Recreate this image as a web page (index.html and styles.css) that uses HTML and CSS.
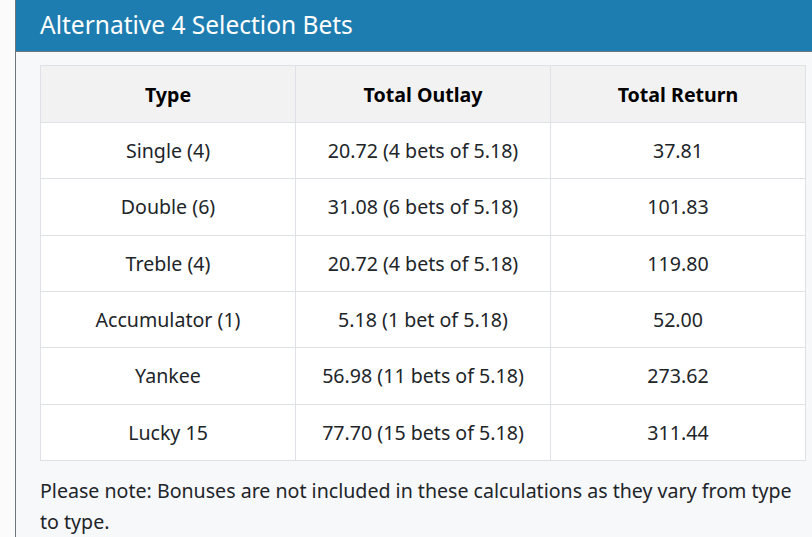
FILE: index.html
```html
<!DOCTYPE html>
<html>
<head>
<meta charset="utf-8">
<link rel="stylesheet" href="styles.css">
</head>
<body>
<div class="panel">
  <div class="panel-head">Alternative 4 Selection Bets</div>
  <div class="panel-body">
    <table class="bets">
      <thead>
        <tr><th>Type</th><th>Total Outlay</th><th>Total Return</th></tr>
      </thead>
      <tbody>
        <tr><td>Single (4)</td><td>20.72 (4 bets of 5.18)</td><td>37.81</td></tr>
        <tr><td>Double (6)</td><td>31.08 (6 bets of 5.18)</td><td>101.83</td></tr>
        <tr><td>Treble (4)</td><td>20.72 (4 bets of 5.18)</td><td>119.80</td></tr>
        <tr><td>Accumulator (1)</td><td>5.18 (1 bet of 5.18)</td><td>52.00</td></tr>
        <tr><td>Yankee</td><td>56.98 (11 bets of 5.18)</td><td>273.62</td></tr>
        <tr><td>Lucky 15</td><td>77.70 (15 bets of 5.18)</td><td>311.44</td></tr>
      </tbody>
    </table>
    <p class="note">Please note: Bonuses are not included in these calculations as they vary from type to type.</p>
  </div>
</div>
</body>
</html>
```
FILE: styles.css
```css
html, body {
  margin: 0;
  padding: 0;
  background: #fbfbfc;
  font-family: "Noto Sans", "Open Sans", sans-serif;
  color: #212529;
}
.panel {
  margin-left: 15px;
  width: 820px;
  border-left: 1px solid #6f737a;
  background: #f7f8fa;
  min-height: 537px;
}
.panel-head {
  background: #1e7db0;
  color: #fff;
  font-size: 24.5px;
  height: 52px;
  line-height: 50px;
  padding: 0 24px;
  border-bottom: 1px solid #6f7780;
  box-sizing: border-box;
}
.panel-body {
  padding: 13px 24px 0 24px;
}
.bets {
  border-collapse: collapse;
  width: 766px;
  background: #fff;
  table-layout: fixed;
  font-size: 19.6px;
}
.bets th, .bets td {
  border: 1px solid #dee2e6;
  text-align: center;
  padding: 0;
  height: 55.33px;
}
.bets th {
  background: #f2f2f2;
  color: #000;
  font-weight: 700;
  height: 56px;
}
.note {
  margin: 14px 0 0 0;
  font-size: 19.6px;
  line-height: 31px;
  width: 762px;
}
```
